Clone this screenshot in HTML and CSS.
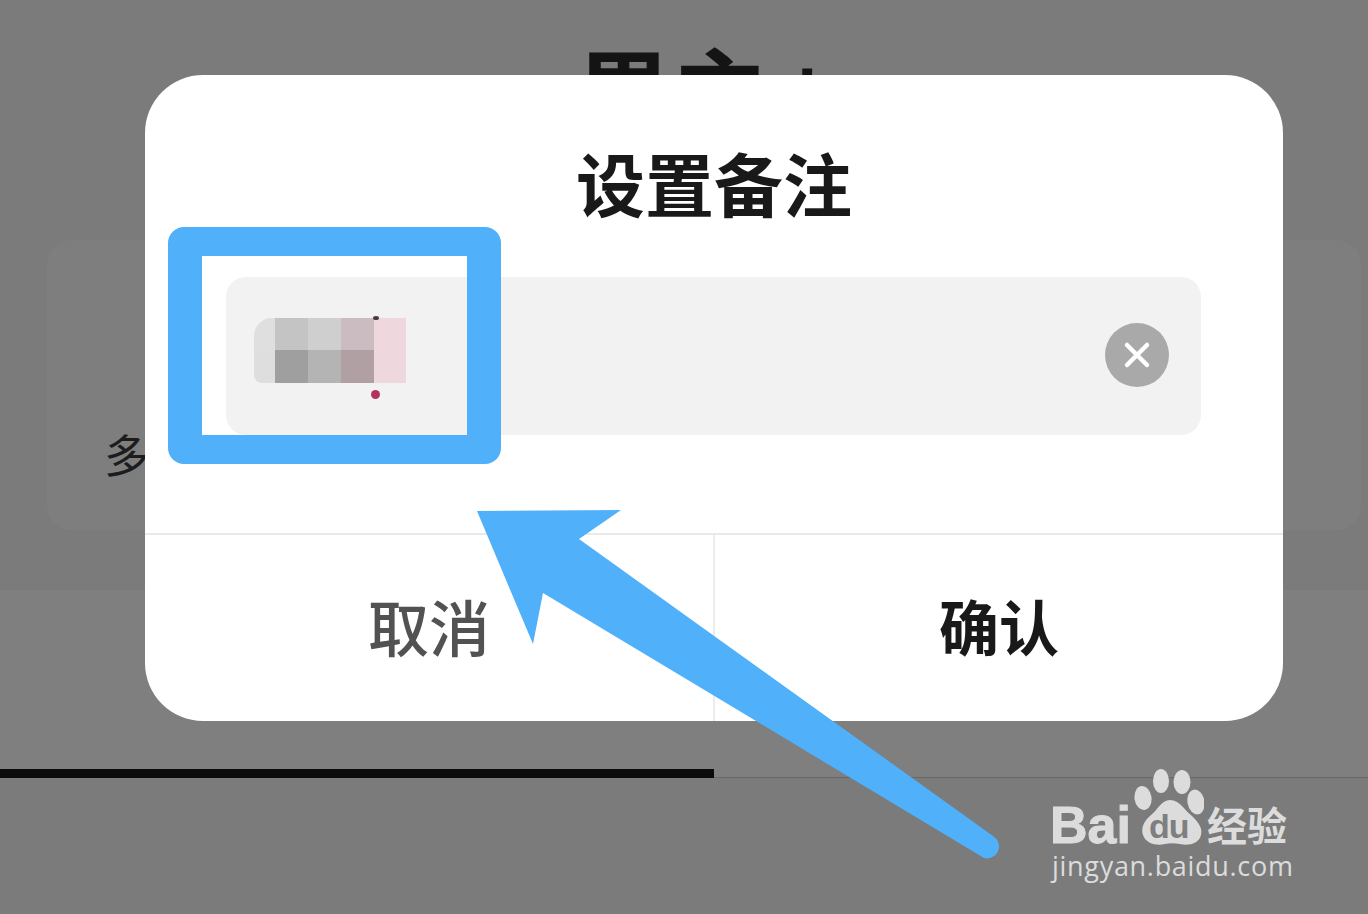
FILE: index.html
```html
<!DOCTYPE html>
<html lang="zh-CN">
<head>
<meta charset="utf-8">
<title>设置备注</title>
<link rel="stylesheet" href="styles.css">
</head>
<body>
<div class="page">
  <h1 class="bg-title">男主<span class="bg-title-tail">人</span></h1>
  <section class="bg-card"><span class="bg-card-text">多</span></section>
  <div class="bg-band"></div>
  <div class="tabbar"><div class="tab-active"></div></div>

  <div class="modal">
    <h2 class="modal-title">设置备注</h2>
    <div class="field">
      <div class="mosaic">
        <i class="m m1"></i><i class="m m2"></i><i class="m m3"></i><i class="m m4"></i><i class="m m5"></i>
        <i class="m m6"></i><i class="m m7"></i><i class="m m8"></i><i class="m m9"></i><i class="m m10"></i>
        <b class="dot dot-top"></b><b class="dot dot-bottom"></b>
      </div>
      <button class="clear" aria-label="清除">
        <svg viewBox="0 0 64 64" width="64" height="64"><path d="M22 22 L42 42 M42 22 L22 42" stroke="#fff" stroke-width="4.5" stroke-linecap="round" fill="none"/></svg>
      </button>
    </div>
    <div class="actions">
      <div class="action cancel">取消</div>
      <div class="action confirm">确认</div>
    </div>
  </div>

  <div class="highlight"></div>
  <svg class="arrow" viewBox="0 0 1368 914" width="1368" height="914">
    <path d="M477 511 L621 510 L579 539 L993 836 A12 12 0 0 1 984 858 L543 593 L533 644 Z" fill="#50b0fa"/>
  </svg>

  <div class="watermark">
    <div class="wm-top">
      <span class="wm-bai">Bai</span>
      <span class="wm-paw">
        <svg viewBox="0 0 70 78" width="70" height="78">
          <ellipse cx="27" cy="13" rx="8" ry="12" fill="#dcdcdc"/>
          <ellipse cx="48" cy="14" rx="8.5" ry="12" fill="#dcdcdc"/>
          <ellipse cx="9" cy="30" rx="8.5" ry="12" fill="#dcdcdc" transform="rotate(-8 9 30)"/>
          <ellipse cx="62" cy="34" rx="8.5" ry="12.5" fill="#dcdcdc" transform="rotate(-10 62 34)"/>
          <path d="M36 32 C27 32 24 42 16 48 C9 54 7 61 9 67 C12 76 23 78 31 76 C35 75 40 75 46 76 C54 78 65 76 67 67 C69 60 64 54 58 48 C50 42 46 32 36 32 Z" fill="#dcdcdc"/>
        </svg>
        <span class="wm-du">du</span>
      </span>
      <span class="wm-cn">经验</span>
    </div>
    <div class="wm-url">jingyan.baidu.com</div>
  </div>
</div>
</body>
</html>
```
FILE: styles.css
```css
* { box-sizing: border-box; }
html, body { margin: 0; padding: 0; }
body { background: #7f7f7f; font-family: "Noto Sans CJK SC", "Liberation Sans", sans-serif; }

.page {
  position: relative;
  width: 1368px;
  height: 914px;
  overflow: hidden;
  display: flex;
  flex-direction: column;
  background: #7b7b7b;
}

.bg-title {
  margin: 40px 0 0;
  height: 96px;
  padding-left: 576px;
  font-size: 96px;
  line-height: 96px;
  font-weight: 700;
  color: #141414;
  white-space: nowrap;
}
.bg-title-tail { font-size: 72px; margin-left: 4px; }

.bg-card {
  margin: 104px 0 0 47px;
  width: 1314px;
  height: 290px;
  border-radius: 24px;
  background: #7e7e7e;
  display: flex;
  align-items: flex-end;
  padding: 0 0 48px 57px;
}
.bg-card-text { font-size: 45px; line-height: 56px; color: #1c1c1c; }

.bg-band {
  margin-top: 60px;
  height: 179px;
  background: #7f7f7f;
}

.tabbar {
  height: 9px;
  background: #7f7f7f;
  border-bottom: 1px solid #696969;
}
.tab-active { width: 714px; height: 9px; background: #0b0b0b; }

.modal {
  position: absolute;
  left: 145px;
  top: 75px;
  width: 1138px;
  height: 646px;
  border-radius: 58px;
  background: #fff;
  display: flex;
  flex-direction: column;
  overflow: hidden;
}
.modal-title {
  margin: 61px 0 0;
  height: 92px;
  text-align: center;
  font-size: 69px;
  line-height: 92px;
  font-weight: 700;
  color: #191919;
}
.field {
  margin: 49px 82px 0 81px;
  height: 158px;
  border-radius: 20px;
  background: #f2f2f2;
  display: flex;
  align-items: center;
  justify-content: space-between;
  padding: 0 32px 2px 28px;
}
.mosaic {
  position: relative;
  display: grid;
  grid-template-columns: 21px 33px 33px 33px 32px;
  grid-template-rows: 32px 33px;
  margin-top: -2px;
  margin-bottom: 8px;
  filter: blur(0.6px);
}
.m { display: block; }
.m1 { background: #dfdfdf; border-top-left-radius: 18px; }
.m2 { background: #c4c4c4; }
.m3 { background: #cfcfcf; }
.m4 { background: #cbbcc2; }
.m5 { background: #eed8dd; }
.m6 { background: #dedede; border-bottom-left-radius: 8px; }
.m7 { background: #9f9f9f; }
.m8 { background: #b4b4b4; }
.m9 { background: #b0a0a4; }
.m10 { background: #eed8dd; }
.dot { position: absolute; border-radius: 50%; }
.dot-top { left: 119px; top: -2px; width: 6px; height: 4px; background: #4a3a44; }
.dot-bottom { left: 117px; top: 72px; width: 9px; height: 9px; background: #b4305f; }

.clear {
  width: 64px;
  height: 64px;
  padding: 0;
  border: 0;
  border-radius: 50%;
  background: #a9a9a9;
  display: block;
}
.clear svg { display: block; }

.actions {
  margin-top: 98px;
  flex: 1;
  display: grid;
  grid-template-columns: 570px 568px;
  border-top: 2px solid #e9e9e9;
}
.action {
  display: flex;
  align-items: center;
  justify-content: center;
  font-size: 60px;
  line-height: 1;
  padding-bottom: 6px;
}
.cancel { color: #525252; font-weight: 500; font-size: 61px; border-right: 2px solid #ececec; }
.confirm { color: #191919; font-weight: 700; }

.highlight {
  position: absolute;
  left: 168px;
  top: 227px;
  width: 333px;
  height: 237px;
  border-style: solid;
  border-color: #50b0fa;
  border-width: 29px 34px;
  border-radius: 16px;
}

.arrow { position: absolute; left: 0; top: 0; pointer-events: none; }

.watermark {
  position: absolute;
  left: 1052px;
  top: 768px;
  width: 250px;
  color: #dcdcdc;
}
.wm-top { display: flex; align-items: flex-end; height: 78px; }
.wm-bai {
  font-family: "Liberation Sans", sans-serif;
  font-weight: 700;
  font-size: 52px;
  line-height: 52px;
  margin: 0 2px -5px -2px;
  -webkit-text-stroke: 1px #dcdcdc;
}
.wm-paw { position: relative; width: 70px; height: 78px; margin-left: 1px; flex: none; }
.wm-paw svg { display: block; }
.wm-du {
  position: absolute;
  left: 15px;
  top: 41px;
  font-family: "Liberation Sans", sans-serif;
  font-weight: 700;
  font-size: 34px;
  line-height: 34px;
  color: #7f7f7f;
  letter-spacing: -1px;
}
.wm-cn {
  font-size: 40px;
  line-height: 44px;
  font-weight: 700;
  margin-left: 3px;
  white-space: nowrap;
}
.wm-url {
  font-family: "Open Sans", "Liberation Sans", sans-serif;
  font-size: 27px;
  line-height: 30px;
  margin-top: 5px;
  letter-spacing: 0.7px;
  white-space: nowrap;
}
```
